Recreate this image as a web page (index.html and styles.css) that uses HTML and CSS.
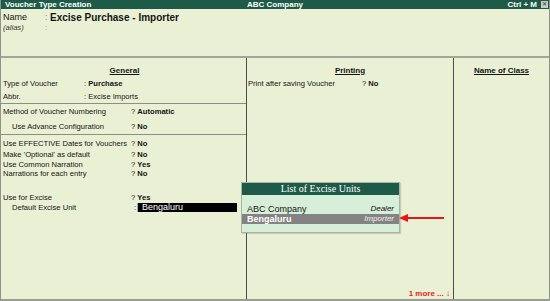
FILE: index.html
```html
<!DOCTYPE html>
<html lang="en">
<head>
    <meta charset="UTF-8">
    <meta name="viewport" content="width=device-width, initial-scale=1.0">
    <title>Voucher Type Creation</title>
    <link rel="stylesheet" href="styles.css">
</head>
<body>
    <div class="window">
        <div class="titlebar">
            <span class="title-left">Voucher Type Creation</span>
            <span class="title-center">ABC Company</span>
            <span class="title-right">Ctrl + M <span class="close-box">&#10005;</span></span>
        </div>

        <div class="header">
            <div class="name-row">
                <span class="name-label">Name</span>
                <span class="name-colon">:</span>
                <span class="name-value">Excise Purchase - Importer</span>
            </div>
            <div class="alias-row">
                <span class="name-label">(alias)</span>
                <span class="name-colon">:</span>
            </div>
        </div>

        <div class="columns">
            <div class="col col-general">
                <div class="section section-top">
                    <div class="col-heading">General</div>
                    <div class="row"><span class="lbl lbl-short">Type of Voucher</span><span class="val"><b>Purchase</b></span></div>
                    <div class="row"><span class="lbl lbl-short">Abbr.</span><span class="val">Excise Imports</span></div>
                </div>
                <div class="section section-numbering">
                    <div class="row row-15"><span class="lbl">Method of Voucher Numbering</span><span class="q">? <b>Automatic</b></span></div>
                    <div class="row row-15"><span class="lbl indent">Use Advance Configuration</span><span class="q">? <b>No</b></span></div>
                </div>
                <div class="section section-options">
                    <div class="row row-11"><span class="lbl">Use EFFECTIVE Dates for Vouchers</span><span class="q">? <b>No</b></span></div>
                    <div class="row row-11"><span class="lbl">Make 'Optional' as default</span><span class="q">? <b>No</b></span></div>
                    <div class="row row-10"><span class="lbl">Use Common Narration</span><span class="q">? <b>Yes</b></span></div>
                    <div class="row row-8"><span class="lbl">Narrations for each entry</span><span class="q">? <b>No</b></span></div>
                    <div class="row row-10 row-excise"><span class="lbl">Use for Excise</span><span class="q">? <b>Yes</b></span></div>
                    <div class="row row-9"><span class="lbl lbl-unit indent">Default Excise Unit</span><span class="unit-colon">:</span><span class="edit-field">Bengaluru</span></div>
                </div>
            </div>

            <div class="col col-printing">
                <div class="col-heading">Printing</div>
                <div class="row"><span class="lbl lbl-print">Print after saving Voucher</span><span class="q">? <b>No</b></span></div>
                <div class="more">1 more ... &#8595;</div>
            </div>

            <div class="col col-class">
                <div class="col-heading">Name of Class</div>
            </div>
        </div>

        <div class="popup">
            <div class="popup-title">List of Excise Units</div>
            <div class="popup-body">
                <div class="popup-item"><span>ABC Company</span><i>Dealer</i></div>
                <div class="popup-item selected"><span>Bengaluru</span><i>Importer</i></div>
            </div>
        </div>

        <svg class="pointer" width="46" height="10" viewBox="0 0 46 10">
            <line x1="7" y1="5" x2="45" y2="5" stroke="#e8141b" stroke-width="2"/>
            <polygon points="0,5 9,1 9,9" fill="#e8141b"/>
        </svg>
    </div>
</body>
</html>
```

FILE: styles.css
```css
* { box-sizing: border-box; }

body {
    margin: 0;
    font-family: "Liberation Sans", Arial, sans-serif;
    font-size: 7.6px;
    color: #141414;
}

.window {
    position: relative;
    width: 550px;
    height: 301px;
    display: flex;
    flex-direction: column;
    background: #eaf0d4;
    border-left: 1px solid #8f9488;
    border-right: 1px solid #8f9488;
    border-bottom: 2px solid #9a9e92;
}

/* title bar */
.titlebar {
    height: 9px;
    flex: none;
    display: flex;
    align-items: center;
    justify-content: space-between;
    position: relative;
    padding: 0 1px 0 4px;
    background: #1d5a47;
    color: #fff;
    font-weight: bold;
    font-size: 8px;
    line-height: 9px;
}

.title-center {
    position: absolute;
    left: 0;
    right: 0;
    text-align: center;
    pointer-events: none;
}

.title-right {
    display: flex;
    align-items: center;
    gap: 4px;
}

.close-box {
    width: 7px;
    height: 7px;
    background: #c9c9c9;
    color: #333;
    font-size: 6px;
    line-height: 7px;
    text-align: center;
    font-weight: normal;
}

/* name header */
.header {
    height: 49px;
    flex: none;
    padding: 3px 0 0 2px;
    border-bottom: 2px solid #a2a597;
}

.name-row {
    display: flex;
    height: 11px;
    line-height: 11px;
    font-size: 9px;
}

.alias-row {
    display: flex;
    height: 10px;
    line-height: 10px;
    font-size: 7.6px;
    font-style: italic;
    color: #333;
}

.name-label { width: 42px; }
.name-colon { width: 5px; color: #888; font-style: normal; }
.name-value { font-weight: bold; font-size: 10px; }

/* columns */
.columns {
    flex: 1;
    display: grid;
    grid-template-columns: 246px 207px 1fr;
}

.col {
    display: flex;
    flex-direction: column;
}

.col-general,
.col-printing { border-right: 1px solid #4d4d4d; }

.col-heading {
    height: 13px;
    line-height: 13px;
    text-align: center;
    font-weight: bold;
    text-decoration: underline;
    font-size: 8px;
}

.col-general .col-heading { margin-top: 6px; }

.col-printing,
.col-class { padding-top: 6px; }

.section { padding-left: 2px; }

.section-top,
.section-numbering { border-bottom: 1px solid #8d8f83; }

.section-options { padding-top: 3px; }

.row {
    display: flex;
    height: 13px;
    line-height: 13px;
    white-space: nowrap;
}

.row-15 { height: 15px; line-height: 15px; }
.row-11 { height: 11px; line-height: 11px; }
.row-10 { height: 10px; line-height: 10px; }
.row-9 { height: 9px; line-height: 9px; }
.row-8 { height: 8px; line-height: 8px; }
.row-excise { margin-top: 15px; }

.lbl { width: 128px; }
.lbl-short { width: 81px; }
.lbl-short + .val::before { content: ": "; }
.lbl-unit { width: 131px; }
.lbl-print { width: 115px; padding-left: 1px; }
.indent { padding-left: 9px; }

.unit-colon { width: 3px; }

.edit-field {
    width: 100px;
    height: 9px;
    line-height: 9px;
    padding-left: 4px;
    background: #000;
    color: #fff;
    border-left: 1px solid #7fb0ff;
    font-size: 9px;
}

.more {
    margin-top: auto;
    margin-bottom: 1px;
    padding-right: 3px;
    text-align: right;
    color: #ee1c25;
    font-weight: bold;
    font-size: 8px;
    line-height: 9px;
}

/* excise unit list */
.popup {
    position: absolute;
    left: 240px;
    top: 182px;
    width: 159px;
    height: 51px;
    background: #d7eed8;
    border: 1px solid #a8b4a6;
    box-shadow: 1px 1px 1px rgba(120, 120, 120, 0.3);
}

.popup-title {
    height: 12px;
    line-height: 12px;
    background: #1d5a47;
    color: #fff;
    text-align: center;
    font-family: "Liberation Serif", "Times New Roman", serif;
    font-size: 10px;
}

.popup-body { padding-top: 9px; }

.popup-item {
    display: flex;
    justify-content: space-between;
    height: 10px;
    line-height: 10px;
    padding: 0 5px 0 5px;
    font-size: 9px;
}

.popup-item i { font-size: 8px; }

.popup-item.selected {
    background: #838383;
    color: #fff;
    font-weight: bold;
}

.popup-item.selected i { font-weight: normal; color: #f0f0f0; }

.pointer {
    position: absolute;
    left: 398px;
    top: 213px;
}
```
